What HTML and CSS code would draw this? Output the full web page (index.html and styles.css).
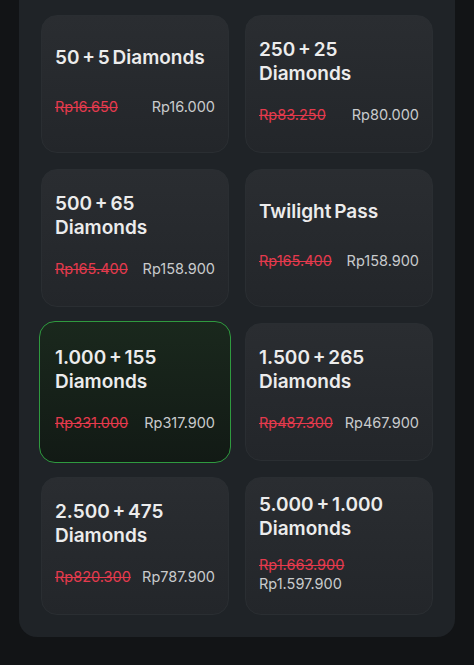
FILE: index.html
```html
<!DOCTYPE html>
<html lang="en">
<head>
<meta charset="UTF-8">
<meta name="viewport" content="width=device-width, initial-scale=1.0">
<title>Top Up Diamonds</title>
<link rel="stylesheet" href="styles.css">
</head>
<body>

<div class="panel">
  <div class="product-grid">
    <div class="product">
      <div class="product-name">50 + 5 Diamonds</div>
      <div class="price-row">
        <span class="price-old">Rp16.650</span>
        <span class="price-new">Rp16.000</span>
      </div>
    </div>
    <div class="product">
      <div class="product-name">250 + 25 Diamonds</div>
      <div class="price-row">
        <span class="price-old">Rp83.250</span>
        <span class="price-new">Rp80.000</span>
      </div>
    </div>
    <div class="product">
      <div class="product-name">500 + 65 Diamonds</div>
      <div class="price-row">
        <span class="price-old">Rp165.400</span>
        <span class="price-new">Rp158.900</span>
      </div>
    </div>
    <div class="product">
      <div class="product-name">Twilight Pass</div>
      <div class="price-row">
        <span class="price-old">Rp165.400</span>
        <span class="price-new">Rp158.900</span>
      </div>
    </div>
    <div class="product selected">
      <div class="product-name">1.000 + 155 Diamonds</div>
      <div class="price-row">
        <span class="price-old">Rp331.000</span>
        <span class="price-new">Rp317.900</span>
      </div>
    </div>
    <div class="product">
      <div class="product-name">1.500 + 265 Diamonds</div>
      <div class="price-row">
        <span class="price-old">Rp487.300</span>
        <span class="price-new">Rp467.900</span>
      </div>
    </div>
    <div class="product">
      <div class="product-name">2.500 + 475 Diamonds</div>
      <div class="price-row">
        <span class="price-old">Rp820.300</span>
        <span class="price-new">Rp787.900</span>
      </div>
    </div>
    <div class="product">
      <div class="product-name">5.000 + 1.000 Diamonds</div>
      <div class="price-row">
        <span class="price-old">Rp1.663.900</span>
        <span class="price-new">Rp1.597.900</span>
      </div>
    </div>
  </div>
</div>

</body>
</html>
```

FILE: styles.css
```css
body {
  margin: 0;
  padding: 0;
  background-color: #121416;
  font-family: Inter, "Noto Sans", sans-serif;
}
.panel {
  margin: 0 19px;
  padding: 15px 22px 22px;
  background-color: #1f2327;
  border-radius: 0 0 18px 18px;
}
.product-grid {
  display: grid;
  grid-template-columns: 1fr 1fr;
  grid-auto-rows: 138px;
  gap: 16px;
}
.product {
  display: flex;
  flex-direction: column;
  justify-content: space-evenly;
  padding: 2px 13px 8px;
  border-radius: 16px;
  border: 1px solid #2a2e32;
  background: linear-gradient(180deg, #2a2d31 0%, #23262a 100%);
}
.product.selected {
  margin: -2px;
  padding: 4px 15px 10px;
  border: 1px solid #2f9a3f;
  background: linear-gradient(180deg, #1a281d 0%, #121a15 100%);
}
.product-name {
  color: #ececec;
  font-size: 19px;
  font-weight: 600;
  line-height: 24px;
  word-spacing: -2px;
}
.price-row {
  display: flex;
  flex-wrap: wrap;
  justify-content: space-between;
  column-gap: 6px;
  font-size: 14.5px;
  line-height: 19px;
}
.price-old {
  color: #e53a4d;
  text-decoration: line-through;
}
.price-new {
  color: #c9cbcd;
}
```
